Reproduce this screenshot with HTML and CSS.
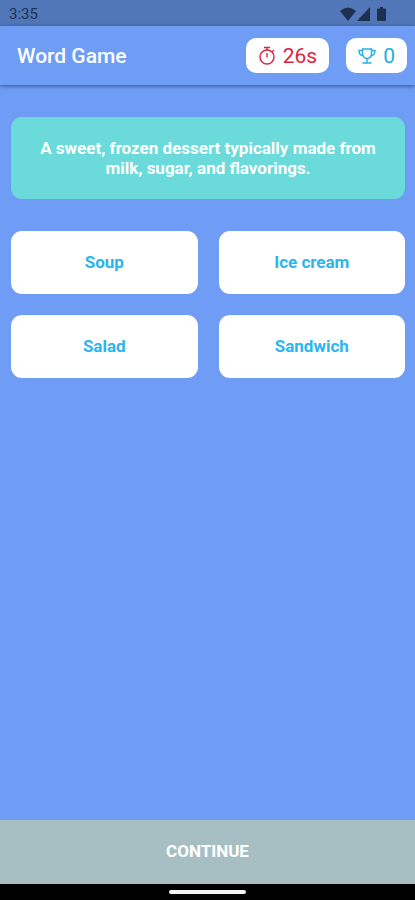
FILE: index.html
```html
<!DOCTYPE html>
<html lang="en">
<head>
  <meta charset="UTF-8">
  <meta name="viewport" content="width=device-width, initial-scale=1.0">
  <title>Word Game</title>
  <link rel="stylesheet" href="styles.css">
</head>
<body>
  <div class="status-bar">
    <span>3:35</span>
    <div class="status-icons">
      <svg width="16" height="14" viewBox="0 0 16 14" fill="currentColor"><path d="M0 4Q8-3 16 4L8 14Z"/></svg>
      <svg width="13" height="14" viewBox="0 0 13 14" fill="currentColor"><path d="M13 0v14H0Z"/></svg>
      <svg class="battery" width="9" height="14" viewBox="0 0 9 14" fill="currentColor"><path d="M3 0h3v1.500H8q1 0 1 1V13q0 1-1 1H1q-1 0-1-1V2.500q0-1 1-1h2Z"/></svg>
    </div>
  </div>

  <header class="app-bar">
    <h1>Word Game</h1>
    <div class="badge timer">
      <svg width="18" height="20" viewBox="0 0 18 20" fill="none" stroke="currentColor" stroke-width="1.400">
        <circle cx="9" cy="11" r="7"/>
        <path d="M6 1.500h6M9 1.500v2.500M9 7v4.500M14 6l2-2"/>
      </svg>
      <span>26s</span>
    </div>
    <div class="badge score">
      <svg width="18" height="20" viewBox="0 0 18 20" fill="none" stroke="currentColor" stroke-width="1.400">
        <path d="M4.500 3h9v4c0 3-1.500 5.500-4.500 5.500S4.500 10 4.500 7ZM4.500 4.500H1C1 7.500 3 9.500 5.500 10M13.500 4.500H17C17 7.500 15 9.500 12.500 10M9 12.500V17M4.500 17h9"/>
      </svg>
      <span>0</span>
    </div>
  </header>

  <main class="game">
    <p class="question">A sweet, frozen dessert typically made from milk, sugar, and flavorings.</p>
    <div class="options">
      <button class="option" type="button">Soup</button>
      <button class="option" type="button">Ice cream</button>
      <button class="option" type="button">Salad</button>
      <button class="option" type="button">Sandwich</button>
    </div>
  </main>

  <button class="continue" type="button">CONTINUE</button>
  <div class="nav-bar"><span class="nav-handle"></span></div>
</body>
</html>
```
FILE: styles.css
```css
* {
  box-sizing: border-box;
}

body {
  margin: 0;
  min-height: 100vh;
  display: flex;
  flex-direction: column;
  background-color: #6f9df6;
  font-family: Roboto, sans-serif;
}

button {
  border: none;
  padding: 0 6px 2px;
  font-family: inherit;
  font-weight: 700;
  font-size: 17px;
  cursor: pointer;
}

.status-bar {
  display: flex;
  justify-content: space-between;
  align-items: center;
  height: 26px;
  padding: 1px 29px 0 9px;
  background-color: #5177b8;
  color: #1d3050;
  font-size: 15px;
}

.status-icons {
  display: flex;
  gap: 1px;
}

.battery {
  margin-left: 6px;
}

.app-bar {
  display: flex;
  align-items: center;
  height: 59px;
  padding: 0 8px 0 17px;
  gap: 17px;
  box-shadow: 0 1px 4px rgba(0, 0, 0, 0.5);
}

.app-bar h1 {
  margin: 0;
  flex: 1;
  color: #fff;
  font-size: 21px;
  font-weight: 500;
}

.badge {
  display: flex;
  align-items: center;
  gap: 7px;
  height: 35px;
  padding: 0 12px;
  border-radius: 10px;
  background-color: #fff;
  font-size: 21px;
}

.timer {
  color: #dc2440;
}

.score {
  color: #22aee9;
}

.game {
  flex: 1;
  padding: 32px 10px 32px 11px;
}

.question {
  margin: 0 0 32px;
  padding: 21px;
  border-radius: 11px;
  background-color: #6adada;
  color: #fff;
  font-size: 17px;
  font-weight: 700;
  line-height: 20px;
  text-align: center;
}

.options {
  display: grid;
  grid-template-columns: 1fr 1fr;
  gap: 21px;
}

.option {
  height: 63px;
  border-radius: 11px;
  background-color: #fff;
  color: #2cb4ed;
}

.continue {
  height: 64px;
  background-color: #a7bfc3;
  color: #fff;
}

.nav-bar {
  display: flex;
  justify-content: center;
  align-items: center;
  height: 16px;
  background-color: #000;
}

.nav-handle {
  width: 77px;
  height: 4px;
  border-radius: 2px;
  background-color: #f2f2f2;
}
```
